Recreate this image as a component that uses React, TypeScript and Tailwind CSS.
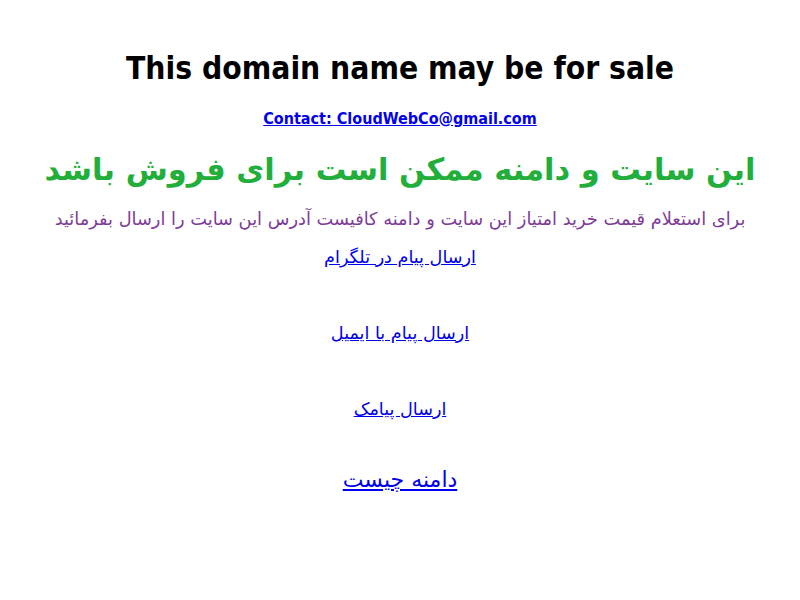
import React from 'react';

const links = [
    'ارسال پیام در تلگرام',
    'ارسال پیام با  ایمیل',
    'ارسال پیامک',
];

const App: React.FC = () => {
    return (
        <div className="min-h-[600px] bg-white text-center font-['DejaVu_Sans',sans-serif]">
            <div className="flex flex-col items-center pt-[48px]">
                <h1 className="font-['DejaVu_Sans_Condensed','DejaVu_Sans',sans-serif] text-[31.5px] leading-[40px] font-bold text-black">
                    This domain name may be for sale
                </h1>
                <a href="#" className="mt-[21px] font-['DejaVu_Sans_Condensed','DejaVu_Sans',sans-serif] text-[16px] leading-[20px] font-bold text-[#0000ee] underline">
                    Contact: CloudWebCo@gmail.com
                </a>
                <h2 dir="rtl" className="mt-[21px] text-[30.5px] leading-[40px] font-bold text-[#22ae3a]">
                    این سایت و دامنه ممکن است برای فروش باشد
                </h2>
                <p dir="rtl" className="mt-[18px] text-[17.8px] leading-[22px] text-[#7d3c98]">
                    برای استعلام قیمت خرید امتیاز این سایت و دامنه کافیست آدرس این سایت را ارسال بفرمائید
                </p>
                <div className="flex flex-col items-center gap-[54px] mt-[16px]">
                    {links.map((label) => (
                        <a key={label} href="#" dir="rtl" className="text-[17.6px] leading-[22px] text-[#0000ee] underline">
                            {label}
                        </a>
                    ))}
                </div>
                <a href="#" dir="rtl" className="mt-[47px] text-[22px] leading-[26px] text-[#0000ee] underline">
                    دامنه چیست
                </a>
            </div>
        </div>
    );
};

export default App;
